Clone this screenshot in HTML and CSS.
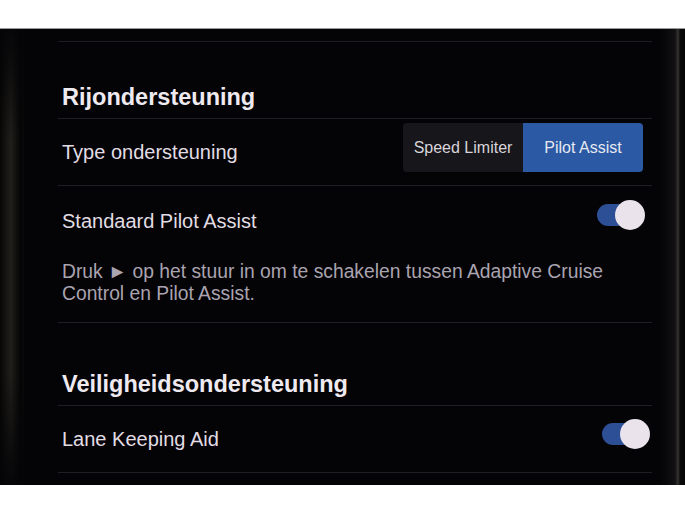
FILE: index.html
```html
<!DOCTYPE html>
<html lang="nl">
<head>
    <meta charset="UTF-8">
    <title>Rijondersteuning</title>
    <link rel="stylesheet" href="styles.css">
</head>
<body>
<div class="frame">
    <div class="bezel-left"></div>
    <div class="screen">
        <div class="rule"></div>

        <h2 class="heading heading-first">Rijondersteuning</h2>
        <div class="row row-type">
            <span class="label">Type ondersteuning</span>
            <div class="segmented">
                <span class="segment">Speed Limiter</span>
                <span class="segment active">Pilot Assist</span>
            </div>
        </div>
        <div class="item">
            <div class="row row-pilot">
                <span class="label label-low">Standaard Pilot Assist</span>
                <span class="toggle"><span class="knob"></span></span>
            </div>
            <p class="hint">Druk &#9658; op het stuur in om te schakelen tussen Adaptive Cruise Control en Pilot Assist.</p>
        </div>

        <h2 class="heading heading-second">Veiligheidsondersteuning</h2>
        <div class="row row-lane">
            <span class="label">Lane Keeping Aid</span>
            <span class="toggle toggle-lane"><span class="knob"></span></span>
        </div>
    </div>
    <div class="bezel-right"></div>
</div>
</body>
</html>
```

FILE: styles.css
```css
html, body{
    margin: 0;
    padding: 0;
    background: #ffffff;
}
body{
    font-family: "Liberation Sans", Arial, sans-serif;
}
.frame{
    display: flex;
    margin-top: 28px;
    height: 456px;
    border-top: 1px solid #9a9a9a;
    background: #040306;
    overflow: hidden;
}
.bezel-left{
    width: 24px;
    background:
        linear-gradient(180deg, rgba(4,3,6,.9) 0%, rgba(4,3,6,0) 25%, rgba(4,3,6,0) 75%, rgba(4,3,6,.9) 100%),
        linear-gradient(90deg, #060605 0%, #161512 6px, #201f1a 11px, #0f0e0d 17px, #050405 21px, #0a090b 24px);
}
.bezel-right{
    width: 25px;
    background: linear-gradient(90deg, #040306 0%, #0a090b 8px, #111012 15px, #35342f 18px, #0c0b0c 20px, #060506 25px);
}
.screen{
    flex: 1;
    padding: 12px 8px 0 34px;
}
.rule{
    height: 1px;
    background: #1c1b21;
}
.heading{
    margin: 0;
    box-sizing: border-box;
    padding-left: 4px;
    font-size: 23.5px;
    line-height: 28px;
    font-weight: bold;
    color: #efeaf0;
    border-bottom: 1px solid #1f1e24;
}
.heading-first{
    height: 77px;
    padding-top: 41px;
}
.heading-second{
    height: 83px;
    padding-top: 47px;
}
.row{
    display: flex;
    align-items: center;
    justify-content: space-between;
    box-sizing: border-box;
    padding-left: 4px;
}
.row-type{
    height: 67px;
    border-bottom: 1px solid #1f1e24;
}
.row-pilot{
    height: 58px;
}
.row-lane{
    height: 67px;
    border-bottom: 1px solid #1f1e24;
}
.label{
    font-size: 20px;
    line-height: 24px;
    color: #e2dde4;
}
.label-low{
    padding-top: 12px;
}
.segmented{
    display: flex;
    margin: 0 9px 9px 0;
    height: 49px;
    border-radius: 4px;
    overflow: hidden;
    background: #17161b;
}
.segment{
    display: flex;
    align-items: center;
    justify-content: center;
    width: 120px;
    font-size: 16px;
    color: #d8d4da;
}
.segment.active{
    background: #2b59a3;
    color: #e6e8f2;
}
.item{
    border-bottom: 1px solid #1f1e24;
}
.hint{
    margin: 0;
    padding: 17px 10px 17px 4px;
    font-size: 19.3px;
    line-height: 22px;
    color: #aaa3b0;
}
.toggle{
    position: relative;
    width: 48px;
    height: 30px;
    margin-right: 7px;
}
.toggle::before{
    content: "";
    position: absolute;
    left: 0;
    top: 4px;
    width: 42px;
    height: 22px;
    border-radius: 11px;
    background: #2c4f96;
}
.toggle-lane{
    margin: 0 2px 10px 0;
}
.knob{
    position: absolute;
    right: 0;
    top: 0;
    width: 30px;
    height: 30px;
    border-radius: 50%;
    background: #ebe3ec;
}
```
